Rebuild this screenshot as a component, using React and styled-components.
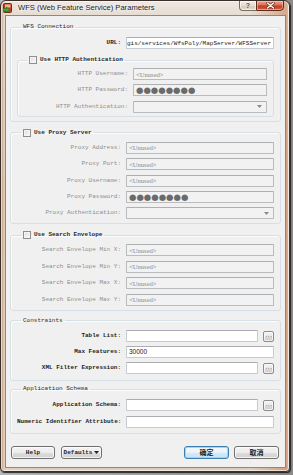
import React from 'react';
import styled, { createGlobalStyle } from 'styled-components';

const mono = `"Liberation Mono", "DejaVu Sans Mono", monospace`;

const Global = createGlobalStyle`
  html, body { margin: 0; padding: 0; background: #8f8f8f; }
  #root { width: 293px; height: 475px; }
  * { box-sizing: border-box; }
`;

const Page = styled.div`
  width: 293px;
  height: 475px;
  padding: 0 3px 3px 0;
  background: linear-gradient(90deg, #b9b9b9, #8a8a8a);
`;

const Window = styled.div`
  width: 290px;
  height: 472px;
  border: 1px solid #3a3029;
  border-radius: 6px 6px 4px 4px;
  box-shadow: 1px 1px 1px rgba(0, 0, 0, 0.75), inset 0 0 0 1px rgba(255, 255, 255, 0.6);
  background:
    linear-gradient(90deg, rgba(170, 112, 72, 0.6) 0px, rgba(236, 214, 194, 0.2) 3px, rgba(0,0,0,0) 40px, rgba(0,0,0,0) 250px, rgba(196, 124, 78, 0.55) 286px, rgba(244, 224, 204, 0.4) 288px),
    linear-gradient(180deg, #eee8e2 0px, #e6dcd2 14px, #dec8b4 40%, #e0ccb9 100%);
  display: flex;
  flex-direction: column;
  overflow: hidden;
`;

const TitleBar = styled.div`
  height: 14px;
  display: flex;
  align-items: flex-start;
  padding: 0 5px 0 2px;
`;

const AppIcon = styled.svg`
  width: 9px;
  height: 10px;
  margin-top: 2px;
  flex: none;
`;

const Title = styled.div`
  margin-left: 6px;
  font-family: "Liberation Sans", Arial, sans-serif;
  font-size: 7.6px;
  line-height: 14px;
  color: #1c1c1c;
  white-space: nowrap;
  text-shadow: 0 0 5px #fff, 0 0 3px #fff;
  flex: 1;
`;

const CaptionButtons = styled.div`
  display: flex;
  margin-top: -1px;
`;

const CaptionHelp = styled.div`
  width: 17px;
  height: 11px;
  border: 1px solid #7a6c60;
  border-right: none;
  border-radius: 0 0 0 4px;
  background: linear-gradient(180deg, #f4eee8 0%, #e6dcd2 50%, #d6c8bc 51%, #e2d6ca 100%);
  box-shadow: inset 0 0 0 1px rgba(255, 255, 255, 0.6);
  display: flex;
  align-items: center;
  justify-content: center;
  font-family: "Liberation Sans", Arial, sans-serif;
  font-weight: bold;
  font-size: 7px;
  color: #4a4a4a;
  text-shadow: 0 0 2px #fff;
`;

const CaptionClose = styled.div`
  width: 28px;
  height: 11px;
  border: 1px solid #5e2a1e;
  border-radius: 0 0 4px 0;
  background: linear-gradient(180deg, #e8a892 0%, #d7715a 45%, #c33a1c 55%, #d2604a 100%);
  box-shadow: inset 0 0 0 1px rgba(255, 210, 190, 0.55);
  display: flex;
  align-items: center;
  justify-content: center;
`;

const Client = styled.div`
  flex: 1;
  margin: 0 3px 3px 4px;
  border: 1px solid #94877a;
  background: #f0f0f0;
  padding: 0 4px;
  display: flex;
  flex-direction: column;
`;

const Group = styled.fieldset`
  margin: ${(p) => p.$top}px 0 0 0;
  padding: ${(p) => p.$pt}px 6px ${(p) => p.$pb}px 6px;
  border: 1px solid #d5dfe5;
  border-radius: 3px;
  box-shadow: inset 1px 1px 0 #fbfcfd;
  min-width: 0;
`;

const Legend = styled.legend`
  margin-left: ${(p) => p.$indent}px;
  padding: 0 2px;
  height: 8px;
  display: flex;
  align-items: center;
  gap: 3px;
  font-family: ${mono};
  font-size: 6px;
  line-height: 8px;
  color: #2a2a2a;
  font-weight: ${(p) => (p.$bold ? 'bold' : 'normal')};
  white-space: nowrap;
`;

const CheckBox = styled.span`
  width: 8px;
  height: 8px;
  border: 1px solid #8e8f8f;
  background: linear-gradient(135deg, #d8d8d8 0%, #f4f4f4 70%, #ffffff 100%);
  box-shadow: inset 0 0 0 1px #f4f4f4;
  flex: none;
`;

const Rows = styled.div`
  display: flex;
  flex-direction: column;
  gap: 4.4px;
`;

const Row = styled.div`
  display: grid;
  grid-template-columns: 104px 1fr ${(p) => (p.$browse ? '11px' : '')};
  column-gap: 5px;
  height: 12px;
`;

const Label = styled.div`
  text-align: right;
  font-family: ${mono};
  font-size: 6px;
  line-height: 12px;
  white-space: nowrap;
  color: ${(p) => (p.$disabled ? '#8e8e8e' : '#1e1e1e')};
  font-weight: ${(p) => (p.$disabled ? 'normal' : 'bold')};
`;

const TextBox = styled.div`
  height: 12px;
  border: 1px solid ${(p) => (p.$disabled ? '#b9bcbf' : '#c6ccd2')};
  border-top-color: ${(p) => (p.$disabled ? '#adb0b3' : '#abadb3')};
  border-radius: 1px;
  background: ${(p) => (p.$disabled ? '#f2f2f2' : '#ffffff')};
  padding: 0 2px;
  display: flex;
  align-items: center;
  justify-content: ${(p) => (p.$end ? 'flex-end' : 'flex-start')};
  overflow: hidden;
  white-space: nowrap;
`;

const Placeholder = styled.span`
  font-family: "Liberation Serif", "Times New Roman", serif;
  font-size: 6.6px;
  color: #8a8a8a;
`;

const Dots = styled.span`
  font-family: "DejaVu Sans", sans-serif;
  font-size: 8.5px;
  letter-spacing: 0px;
  line-height: 10px;
  color: #6a6a6a;
`;

const Value = styled.span`
  font-family: ${(p) => (p.$mono ? mono : '"Liberation Sans", Arial, sans-serif')};
  font-size: ${(p) => (p.$mono ? '6px' : '6.5px')};
  color: #1a1a1a;
`;

const Arrow = styled.svg`
  margin-left: auto;
  margin-right: 2px;
  width: 5px;
  height: 3px;
`;

const Browse = styled.div`
  width: 11px;
  height: 11px;
  margin-top: 1px;
  border: 1px solid #8c8c8c;
  border-radius: 2px;
  background: linear-gradient(180deg, #f3f3f3 0%, #e8e8e8 50%, #d9d9d9 51%, #cdcdcd 100%);
  box-shadow: inset 0 0 0 1px rgba(255, 255, 255, 0.7);
  display: flex;
  align-items: center;
  justify-content: center;
  font-family: ${mono};
  font-size: 5px;
  line-height: 5px;
  color: #444;
  letter-spacing: -0.5px;
`;

const ButtonBar = styled.div`
  display: flex;
  align-items: center;
  margin-top: 12px;
  padding: 0 2px 0 1px;
  gap: 6px;
`;

const Spacer = styled.div`
  flex: 1;
`;

const PushButton = styled.div`
  width: ${(p) => p.$w}px;
  height: 13px;
  margin-left: ${(p) => p.$ml || 0}px;
  border: 1px solid ${(p) => (p.$default ? '#3c7fb1' : '#707070')};
  border-radius: 3px;
  background: ${(p) =>
    p.$default
      ? 'linear-gradient(180deg, #f4fafe 0%, #e6f3fb 50%, #d3eaf8 51%, #c6e3f5 100%)'
      : 'linear-gradient(180deg, #f4f4f4 0%, #ececec 50%, #dedede 51%, #d0d0d0 100%)'};
  box-shadow: inset 0 0 0 1px ${(p) => (p.$default ? 'rgba(150, 210, 245, 0.9)' : 'rgba(255, 255, 255, 0.75)')};
  display: flex;
  align-items: center;
  justify-content: center;
  gap: 2px;
  font-family: ${(p) => (p.$cjk ? '"Noto Sans CJK SC", sans-serif' : mono)};
  font-size: ${(p) => (p.$cjk ? '7px' : '6px')};
  font-weight: bold;
  color: #222;
  white-space: nowrap;
`;

const ComboArrow = () => (
  <Arrow viewBox="0 0 5 3">
    <path d="M0 0 L5 0 L2.5 3 Z" fill="#8a8a8a" />
  </Arrow>
);

const Field = ({ label, disabled, children, browse, end, combo }) => (
  <Row $browse={browse}>
    <Label $disabled={disabled}>{label}</Label>
    <TextBox $disabled={disabled} $end={end}>
      {children}
      {combo && <ComboArrow />}
    </TextBox>
    {browse && <Browse>...</Browse>}
  </Row>
);

const Unused = () => <Placeholder>&lt;Unused&gt;</Placeholder>;
const Pw = () => <Dots>●●●●●●●●</Dots>;

export default function App() {
  return (
    <>
      <Global />
      <Page>
        <Window>
          <TitleBar>
            <AppIcon viewBox="0 0 9 10">
              <rect x="0.5" y="0.5" width="8" height="9" rx="1" fill="#b8442a" stroke="#7a2414" />
              <rect x="2" y="1.5" width="5.5" height="3" fill="#eab29c" />
              <path d="M0 5.5 H3.5 V4 L6.5 6.8 L3.5 9.5 V8 H0 Z" fill="#3fae2c" stroke="#1e6e16" strokeWidth="0.5" />
            </AppIcon>
            <Title>WFS (Web Feature Service) Parameters</Title>
            <CaptionButtons>
              <CaptionHelp>?</CaptionHelp>
              <CaptionClose>
                <svg width="9" height="7" viewBox="0 0 9 7">
                  <path d="M1.5 1 L7.5 6 M7.5 1 L1.5 6" stroke="#6a2010" strokeWidth="2.6" strokeLinecap="round" />
                  <path d="M1.5 1 L7.5 6 M7.5 1 L1.5 6" stroke="#ffffff" strokeWidth="1.5" strokeLinecap="round" />
                </svg>
              </CaptionClose>
            </CaptionButtons>
          </TitleBar>
          <Client>
            <Group $top={7} $pt={6} $pb={4}>
              <Legend $indent={4}>WFS Connection</Legend>
              <Row>
                <Label>URL:</Label>
                <TextBox $end>
                  <Value $mono>gis/services/WfsPoly/MapServer/WFSServer</Value>
                </TextBox>
              </Row>
              <Group $top={7} $pt={4} $pb={3}>
                <Legend $indent={3} $bold>
                  <CheckBox />
                  Use HTTP Authentication
                </Legend>
                <Rows>
                  <Field label="HTTP Username:" disabled><Unused /></Field>
                  <Field label="HTTP Password:" disabled><Pw /></Field>
                  <Field label="HTTP Authentication:" disabled combo />
                </Rows>
              </Group>
            </Group>

            <Group $top={7} $pt={5} $pb={4}>
              <Legend $indent={4} $bold>
                <CheckBox />
                Use Proxy Server
              </Legend>
              <Rows>
                <Field label="Proxy Address:" disabled><Unused /></Field>
                <Field label="Proxy Port:" disabled><Unused /></Field>
                <Field label="Proxy Username:" disabled><Unused /></Field>
                <Field label="Proxy Password:" disabled><Pw /></Field>
                <Field label="Proxy Authentication:" disabled combo />
              </Rows>
            </Group>

            <Group $top={7} $pt={5} $pb={4}>
              <Legend $indent={4} $bold>
                <CheckBox />
                Use Search Envelope
              </Legend>
              <Rows>
                <Field label="Search Envelope Min X:" disabled><Unused /></Field>
                <Field label="Search Envelope Min Y:" disabled><Unused /></Field>
                <Field label="Search Envelope Max X:" disabled><Unused /></Field>
                <Field label="Search Envelope Max Y:" disabled><Unused /></Field>
              </Rows>
            </Group>

            <Group $top={6} $pt={5} $pb={6}>
              <Legend $indent={4}>Constraints</Legend>
              <Rows>
                <Field label="Table List:" browse />
                <Field label="Max Features:"><Value>30000</Value></Field>
                <Field label="XML Filter Expression:" browse />
              </Rows>
            </Group>

            <Group $top={4} $pt={6} $pb={5}>
              <Legend $indent={4}>Application Schema</Legend>
              <Rows>
                <Field label="Application Schema:" browse />
                <Field label="Numeric Identifier Attribute:" />
              </Rows>
            </Group>

            <ButtonBar>
              <PushButton $w={44}>Help</PushButton>
              <PushButton $w={41}>
                Defaults
                <svg width="5" height="3" viewBox="0 0 5 3">
                  <path d="M0 0 L5 0 L2.5 3 Z" fill="#222" />
                </svg>
              </PushButton>
              <Spacer />
              <PushButton $w={45} $cjk $default>确定</PushButton>
              <PushButton $w={45} $cjk $ml={-1}>取消</PushButton>
            </ButtonBar>
          </Client>
        </Window>
      </Page>
    </>
  );
}
